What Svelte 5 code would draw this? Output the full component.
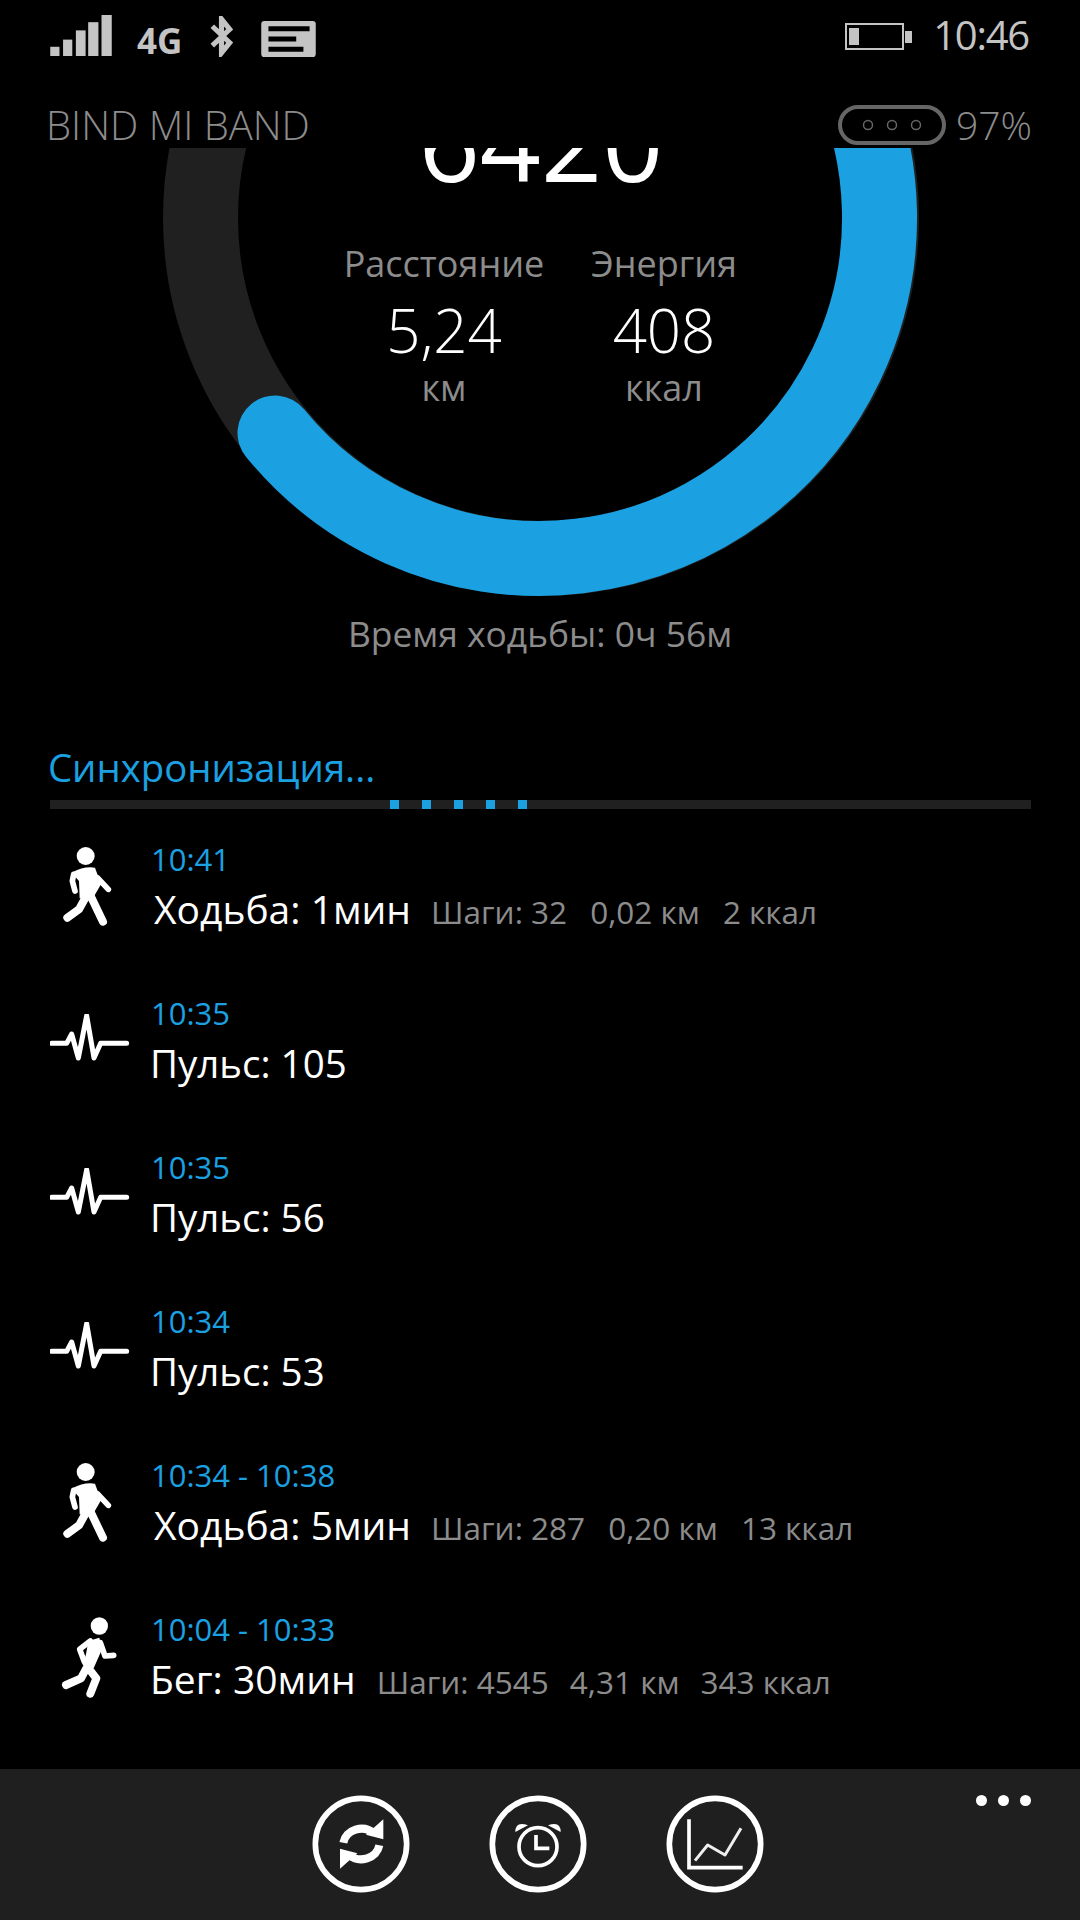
<script>
  const rows = [
    { t: '10:41', kind: 'walk', main: 'Ходьба: 1мин', sub: ['Шаги: 32', '0,02 км', '2 ккал'] },
    { t: '10:35', kind: 'pulse', main: 'Пульс: 105', sub: [] },
    { t: '10:35', kind: 'pulse', main: 'Пульс: 56', sub: [] },
    { t: '10:34', kind: 'pulse', main: 'Пульс: 53', sub: [] },
    { t: '10:34 - 10:38', kind: 'walk', main: 'Ходьба: 5мин', sub: ['Шаги: 287', '0,20 км', '13 ккал'] },
    { t: '10:04 - 10:33', kind: 'run', main: 'Бег: 30мин', sub: ['Шаги: 4545', '4,31 км', '343 ккал'] }
  ];
</script>

<div class="page">
  <div class="status">
    <svg class="signal" viewBox="0 0 60 40" width="62" height="41">
      <rect x="0" y="31" width="9" height="9" />
      <rect x="12.5" y="24" width="9" height="16" />
      <rect x="25" y="15" width="9.500" height="25" />
      <rect x="37" y="7" width="10" height="33" />
      <rect x="50" y="0" width="10" height="40" />
    </svg>
    <span class="net">4G</span>
    <svg class="bt" viewBox="0 0 24 40" width="25" height="41">
      <path d="M3 10 L20 26 L12 36 V3 L20 13 L3 29" />
    </svg>
    <svg class="msg" viewBox="0 0 53 35" width="55" height="36">
      <rect width="53" height="35" rx="3" />
      <path d="M7 7.500 H47 M7 17.500 H34 M7 27.500 H41" />
    </svg>
    <span class="spacer"></span>
    <svg class="batt" viewBox="0 0 68 28" width="68" height="28">
      <rect x="1" y="1" width="57" height="25" />
      <rect class="fill" x="4" y="5" width="10" height="17" />
      <rect class="fill" x="60" y="8" width="7" height="12" />
    </svg>
    <span class="clock">10:46</span>
  </div>

  <div class="header">
    <span class="title">BIND MI BAND</span>
    <svg class="band" viewBox="0 0 108 40" width="108" height="40">
      <rect x="2" y="2" width="104" height="36" rx="18" />
      <circle cx="30" cy="20" r="4.500" />
      <circle cx="54" cy="20" r="4.500" />
      <circle cx="78" cy="20" r="4.500" />
    </svg>
    <span class="pct">97%</span>
  </div>

  <div class="gauge">
    <svg class="ring" viewBox="0 148 1080 460" width="1080" height="460">
      <circle class="track" cx="541" cy="218" r="340.500" />
      <path class="arc" d="M275 433 A340.500 340.500 0 1 0 541 -122.500" />
    </svg>
    <div class="steps">6420</div>
    <div class="stats">
      <div class="stat">
        <span class="lab">Расстояние</span>
        <span class="val">5,24</span>
        <span class="unit">км</span>
      </div>
      <div class="stat">
        <span class="lab">Энергия</span>
        <span class="val">408</span>
        <span class="unit">ккал</span>
      </div>
    </div>
  </div>

  <div class="walktime">Время ходьбы: 0ч 56м</div>

  <div class="sync">Синхронизация...</div>
  <div class="progress">
    {#each [0, 1, 2, 3, 4] as i}
      <i class="dot"></i>
    {/each}
  </div>

  <div class="list">
    {#each rows as r}
      <div class="row {r.kind}">
        <div class="ico">
          {#if r.kind === 'walk'}
            <svg viewBox="90 60 180 270" width="60" height="90">
              <circle class="solid" cx="170" cy="105" r="27" />
              <path class="solid" d="M128 155 Q165 135 198 140 L216 190 L190 235 L152 232 L150 180 Z" />
              <path class="limb thin" d="M134 160 L130 180 L138 210 M205 170 L238 205" />
              <path class="limb" d="M172 225 L150 265 L115 290 M185 225 L222 302" />
            </svg>
          {:else if r.kind === 'run'}
            <svg viewBox="90 60 180 270" width="60" height="90">
              <circle class="solid" cx="205" cy="105" r="26" />
              <path class="solid" d="M172 150 L205 140 L213 175 L188 232 L155 222 L165 190 Z" />
              <path class="limb thin" d="M178 150 L146 175 L160 212 M208 155 L222 195 L248 193" />
              <path class="limb" d="M168 228 L150 262 L105 282 M175 235 L196 262 L178 308" />
            </svg>
          {:else}
            <svg viewBox="60 50 240 180" width="80" height="60">
              <path class="beat" d="M65 138 H110 L125 110 L145 182 L170 55 L192 182 L212 138 H290" />
            </svg>
          {/if}
        </div>
        <div class="txt">
          <div class="time">{r.t}</div>
          <div class="line">
            <span class="main">{r.main}</span>
            {#each r.sub as s}
              <span class="sub">{s}</span>
            {/each}
          </div>
        </div>
      </div>
    {/each}
  </div>

  <div class="appbar">
    <div class="btn">
      <svg viewBox="66 75 294 294" width="98" height="98">
        <circle class="rim" cx="213" cy="222" r="137" />
        <path class="ic" d="M160 218 A55 50 0 0 1 252 190 M268 226 A55 50 0 0 1 176 254" />
        <path class="icf" d="M280 148 V208 L228 194 Z M150 296 V236 L202 250 Z" />
      </svg>
    </div>
    <div class="btn">
      <svg viewBox="597 75 294 294" width="98" height="98">
        <circle class="rim" cx="744" cy="222" r="137" />
        <circle class="ic2" cx="744" cy="230" r="57" />
        <path class="ic2" d="M738 195 V235 H778" />
        <path class="icf" d="M676 186 Q676 152 714 166 Z M812 186 Q812 152 774 166 Z" />
      </svg>
    </div>
    <div class="btn">
      <svg viewBox="1128 75 294 294" width="98" height="98">
        <circle class="rim" cx="1275" cy="222" r="137" />
        <path class="ic2" d="M1197 148 V293 H1358" />
        <path class="ic3" d="M1215 272 L1253 225 L1305 255 L1353 175" />
      </svg>
    </div>
    <div class="more"><i></i><i></i><i></i></div>
  </div>
</div>

<style>
  :global(body) { margin: 0; background: #000; }
  .page {
    width: 1080px; height: 1920px; background: #000; overflow: hidden;
    display: flex; flex-direction: column;
    font-family: "Open Sans", "Noto Sans", sans-serif; color: #fff;
  }
  .status { height: 70px; display: flex; align-items: flex-start; padding: 15px 51px 0 50px; box-sizing: border-box; }
  .signal { fill: #c4c4c4; flex: none; }
  .net { margin: 9px 0 0 25px; font-size: 35px; line-height: 34px; font-weight: 700; color: #c4c4c4; width: 44px; }
  .bt { margin: 1px 0 0 28px; fill: none; stroke: #c4c4c4; stroke-width: 5; }
  .msg { margin: 6px 0 0 27px; }
  .msg rect { fill: #c4c4c4; }
  .msg path { stroke: #000; stroke-width: 5; fill: none; }
  .spacer { flex: 1; }
  .batt { margin: 8px -3px 0 0; }
  .batt rect { fill: none; stroke: #c4c4c4; stroke-width: 2; }
  .batt .fill { fill: #c4c4c4; stroke: none; }
  .clock { margin: -7px 0 0 23px; font-size: 40px; line-height: 54px; color: #c4c4c4; letter-spacing: -1.250px; }

  .header { height: 78px; display: flex; align-items: center; padding: 32px 48px 0 46px; box-sizing: border-box; }
  .title { flex: 1; font-size: 40px; font-weight: 300; color: #8c8c8c; line-height: 60px; }
  .band { fill: none; }
  .band rect { stroke: #666; stroke-width: 4; }
  .band circle { stroke: #666; stroke-width: 1.500; }
  .pct { margin-left: 10px; font-size: 39px; font-weight: 300; color: #8c8c8c; line-height: 60px; }

  .gauge { position: relative; height: 460px; overflow: hidden; flex: none; }
  .ring { position: absolute; left: 0; top: 0; fill: none; }
  .track { stroke: #202020; stroke-width: 75; }
  .arc { stroke: #1ba1e2; stroke-width: 75; stroke-linecap: round; }
  .steps {
    position: relative; text-align: center; font-size: 107px; line-height: 120px;
    margin-top: -67px; font-weight: 400; padding-left: 2px;
  }
  .stats { position: relative; display: flex; margin-top: 38px; }
  .stat { position: absolute; top: 0; transform: translateX(-50%); display: flex; flex-direction: column; align-items: center; }
  .stat:nth-child(1) { left: 444px; }
  .stat:nth-child(2) { left: 664px; }
  .lab { font-size: 36px; line-height: 50px; color: #8c8c8c; white-space: nowrap; }
  .val { font-size: 60px; line-height: 76px; font-weight: 300; margin-top: 3px; }
  .unit { font-size: 36px; line-height: 40px; color: #8c8c8c; }

  .walktime { height: 134px; margin-top: -2px; text-align: center; font-size: 35.400px; line-height: 54px; color: #8c8c8c; flex: none; }
  .sync { height: 50px; padding-left: 48px; font-size: 38.300px; line-height: 54px; color: #1ba1e2; flex: none; }
  .progress {
    height: 9px; margin: 10px 49px 0 50px; background: #202020; flex: none;
    display: flex; gap: 23px; padding-left: 340px;
  }
  .dot { width: 9px; height: 9px; background: #1ba1e2; flex: none; }

  .list { flex: 1; padding-top: 28px; }
  .row { height: 154px; display: flex; box-sizing: border-box; }
  .ico { width: 151px; flex: none; box-sizing: border-box; }
  .ico svg { display: block; margin: 4px 0 0 59px; }
  .row.run .ico svg { margin-left: 61px; }
  .row.pulse .ico svg { margin: 23px 0 0 50px; }
  .beat { fill: none; stroke: #fff; stroke-width: 15; stroke-linejoin: round; stroke-linecap: round; }
  .solid { fill: #fff; }
  .limb { fill: none; stroke: #fff; stroke-width: 24; stroke-linecap: round; stroke-linejoin: round; }
  .limb.thin { stroke-width: 17; }
  .time { font-size: 31px; line-height: 44px; color: #1ba1e2; }
  .line { display: flex; align-items: baseline; gap: 23px; white-space: nowrap; margin-top: 1px; }
  .main { font-size: 39px; line-height: 54px; margin-left: -1px; }
  .row.pulse .main { font-size: 38.500px; }
  .row.walk .main { margin-left: 3px; margin-right: -3px; }
  .row.run .line { gap: 21px; }
  .sub { font-size: 31.500px; line-height: 40px; color: #8c8c8c; }

  .appbar {
    height: 151px; background: #1f1f1f; flex: none; position: relative;
    display: flex; justify-content: center; gap: 79px; padding: 26px 4px 0 0; box-sizing: border-box;
  }
  .btn svg { display: block; }
  .rim { fill: none; stroke: #fff; stroke-width: 17; }
  .ic { fill: none; stroke: #fff; stroke-width: 24; }
  .ic2 { fill: none; stroke: #fff; stroke-width: 11; }
  .ic3 { fill: none; stroke: #eee; stroke-width: 9; stroke-linejoin: round; }
  .icf { fill: #fff; }
  .more { position: absolute; right: 49px; top: 26px; display: flex; gap: 11px; }
  .more i { width: 11px; height: 11px; background: #fff; border-radius: 50%; }
</style>
